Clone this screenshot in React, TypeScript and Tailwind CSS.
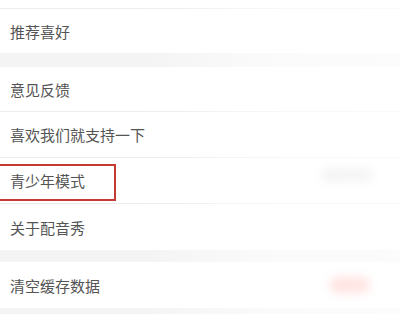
import React from "react";

const font = { fontFamily: '"Noto Sans CJK SC", "Noto Sans", sans-serif' };

function Row({ label, h, border, children }: { label: string; h: string; border?: boolean; children?: React.ReactNode }) {
  return (
    <div className={`relative flex items-center bg-white pl-[10px] ${h} ${border ? "border-b border-[#ececec]" : ""}`}>
      <span className="text-[15px] leading-none text-[#555]">{label}</span>
      <div className="flex-1" />
      {children}
    </div>
  );
}

export default function App() {
  return (
    <div className="relative h-[314px] w-[400px] overflow-hidden bg-[#f4f4f4]" style={font}>
      <div className="h-[8px] border-b border-[#ececec] bg-white box-content" />
      <Row label="推荐喜好" h="h-[44px]" />
      <div className="h-[14px]" />
      <Row label="意见反馈" h="h-[45px]" border />
      <Row label="喜欢我们就支持一下" h="h-[46px]" border />
      <Row label="青少年模式" h="h-[46px]" border>
        <div className="absolute left-[-2px] top-[6px] h-[37px] w-[118px] border-2 border-[#c23a31]" />
        <div className="mr-[28px] mb-[12px] h-[14px] w-[50px] rounded bg-[#e2e2e2] blur-[4px]" />
      </Row>
      <Row label="关于配音秀" h="h-[46px]" />
      <div className="h-[12px]" />
      <Row label="清空缓存数据" h="h-[46px]">
        <div className="mr-[30px] h-[16px] w-[40px] rounded-full bg-[#ffb0a8] blur-[5px]" />
      </Row>
      <div className="pointer-events-none absolute left-[140px] top-0 h-full w-[260px] bg-gradient-to-r from-white/0 via-white/60 to-white/70" />
    </div>
  );
}
